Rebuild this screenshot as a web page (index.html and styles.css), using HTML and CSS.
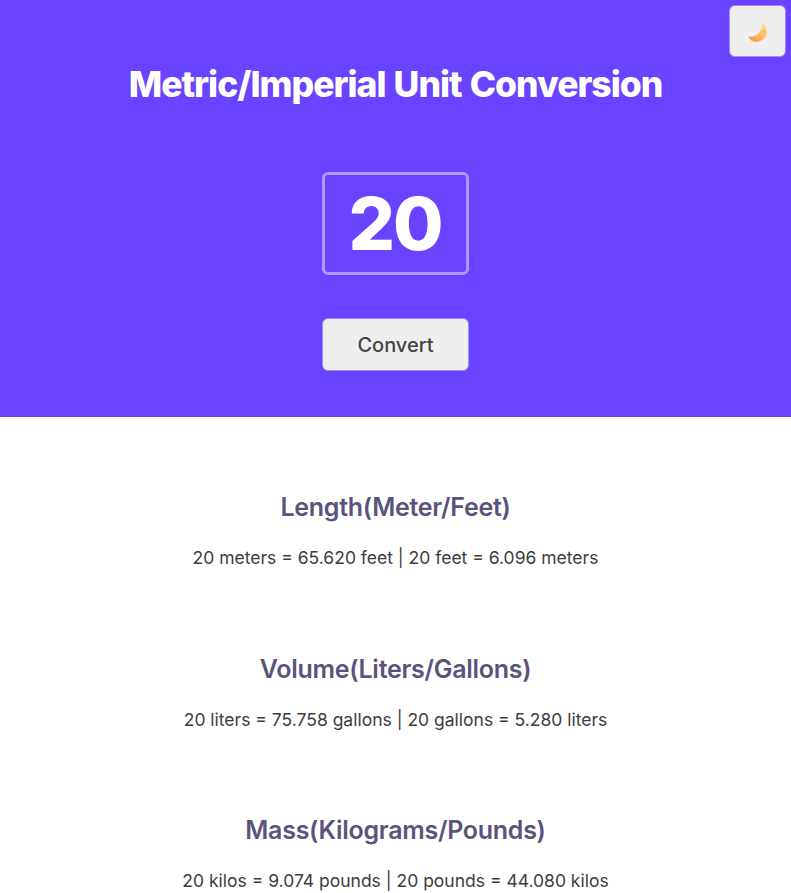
FILE: index.html
```html
<!DOCTYPE html>
<html lang="en">
<head>
<meta charset="utf-8">
<title>Unit Conversion</title>
<link rel="stylesheet" href="styles.css">
</head>
<body>
<header class="hero">
<button class="theme" aria-label="Toggle theme"><svg width="20" height="20" viewBox="0 0 20 20"><defs><linearGradient id="g" x1="0" y1="1" x2=".8" y2="0"><stop offset="0" stop-color="#e9964e"/><stop offset=".35" stop-color="#fbb04f"/><stop offset="1" stop-color="#ffd98c"/></linearGradient></defs><path fill="url(#g)" d="M14.300 .5C17.500 2 19.800 6 18.800 10C17.700 15.500 13 19 8.500 19C4.500 19 1.500 16.500 .5 13.200C5 14 8 13 10.500 10.500C13 7.800 14.200 4.500 14.300 .5Z"/><g fill="#eda54c"><circle cx="16" cy="8.500" r=".8"/><circle cx="12" cy="14.500" r=".9"/><circle cx="7" cy="16" r=".7"/></g></svg></button>
<h1>Metric/Imperial Unit Conversion</h1>
<input class="value" type="text" value="20" aria-label="Value">
<button class="convert">Convert</button>
</header>
<main>
<section><h2>Length(Meter/Feet)</h2><p>20 meters = 65.620 feet | 20 feet = 6.096 meters</p></section>
<section><h2>Volume(Liters/Gallons)</h2><p>20 liters = 75.758 gallons | 20 gallons = 5.280 liters</p></section>
<section><h2>Mass(Kilograms/Pounds)</h2><p>20 kilos = 9.074 pounds | 20 pounds = 44.080 kilos</p></section>
</main>
</body>
</html>
```
FILE: styles.css
```css
* { box-sizing: border-box; }
body { margin: 0; font-family: Inter, sans-serif; background: #fff; }
.hero { position: relative; height: 417px; background: #6943ff; display: flex; flex-direction: column; align-items: center; padding-top: 63px; }
h1 { margin: 0; font-size: 35.500px; line-height: 44px; font-weight: 800; color: #fff; letter-spacing: -1px; word-spacing: 1.300px; white-space: nowrap; }
.value { margin-top: 65px; width: 147px; height: 103px; border: 3px solid #b295ff; border-radius: 6px; background: transparent; color: #fff; font: 800 73px Inter, sans-serif; letter-spacing: -2px; text-align: center; padding: 0 1px 0 0; outline: none; }
.convert { margin-top: 43px; width: 147px; height: 53px; border: 1px solid #a08aff; border-radius: 6px; background: #efefef; color: #444; font: 500 20px Inter, sans-serif; padding: 0; }
.theme { position: absolute; top: 5px; right: 5px; width: 57px; height: 52px; border: 1px solid #a08aff; border-radius: 6px; background: #efefef; display: flex; align-items: center; justify-content: center; padding: 3px 0 0 1px; }
main { padding-top: 75px; text-align: center; }
section { height: 161.500px; }
section:last-child { height: 78px; overflow: hidden; }
h2 { margin: 0; font-size: 25px; line-height: 30px; font-weight: 600; color: #5a537b; letter-spacing: -.28px; }
p { margin: 25px 0 0; font-size: 17.500px; line-height: 21px; color: #3d3d3d; }
```
